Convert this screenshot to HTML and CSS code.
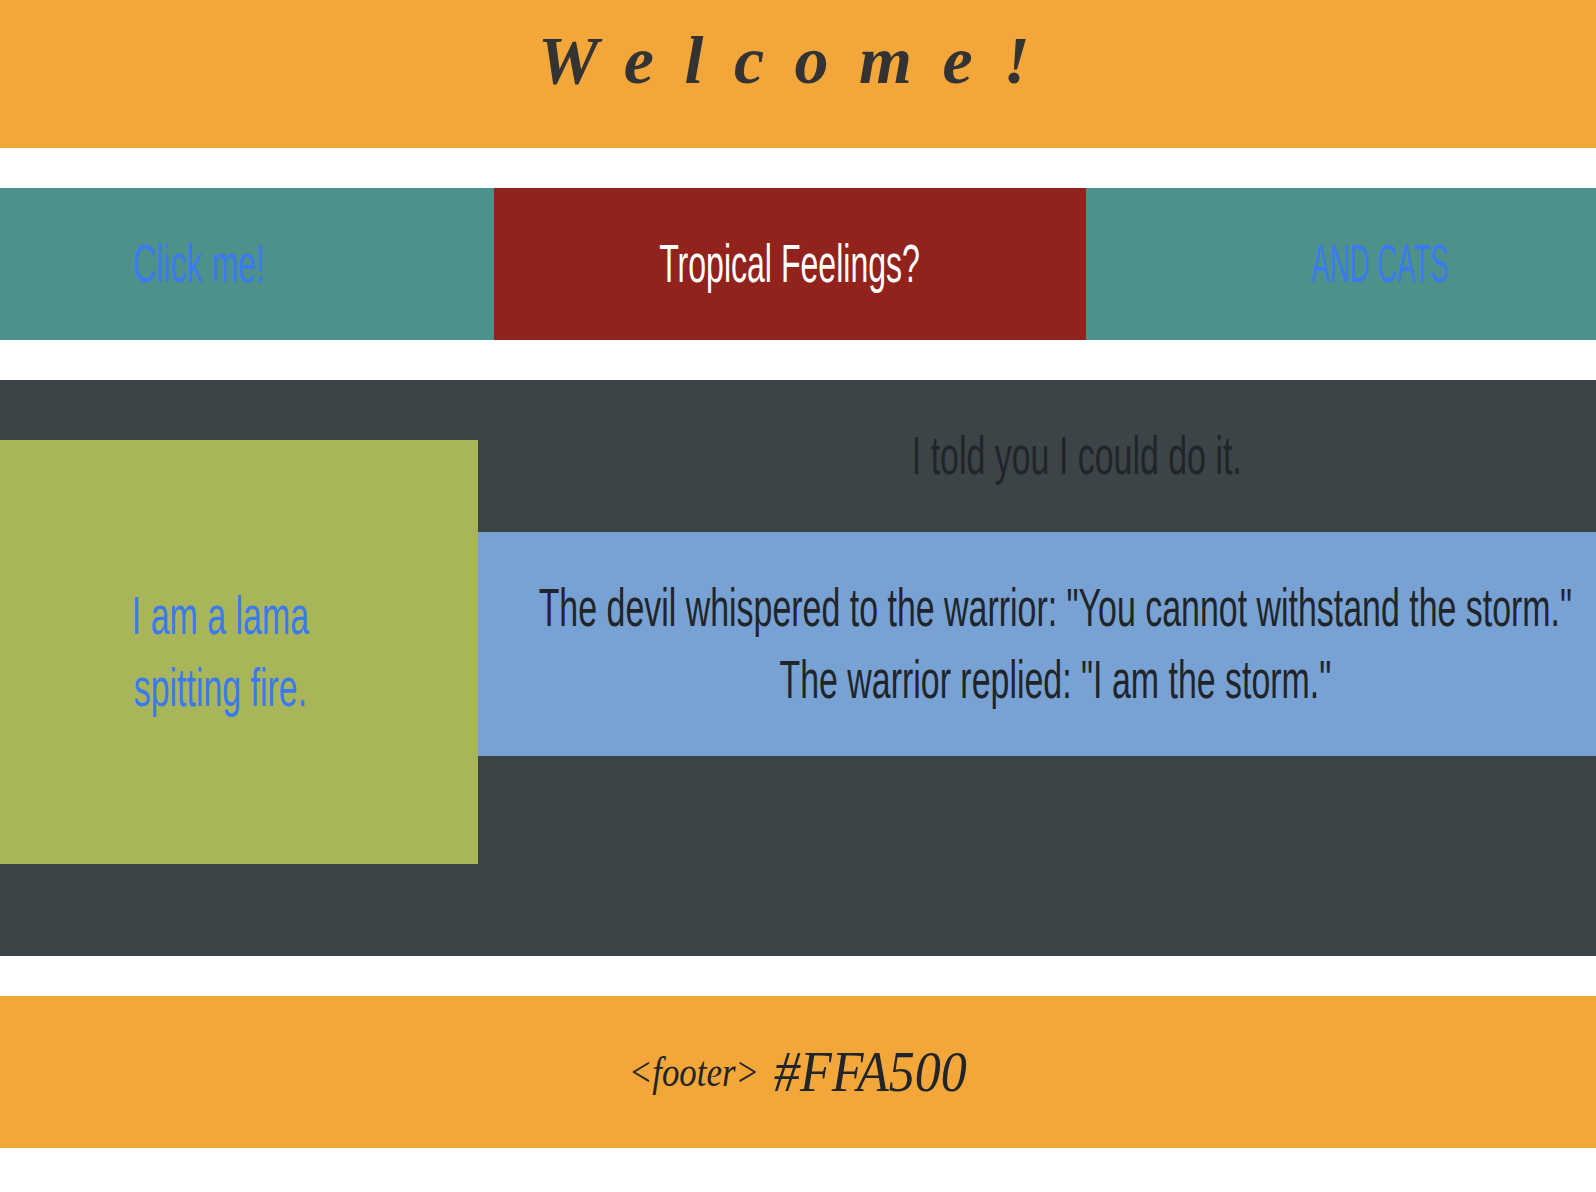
FILE: index.html
```html
<!DOCTYPE html>
<html lang="en">
<head>
    <meta charset="UTF-8">
    <meta name="viewport" content="width=device-width, initial-scale=1.0">
    <title>Welcome!</title>
    <link rel="stylesheet" href="styles.css">
</head>
<body>
    <header class="site-header">
        <h1 class="welcome">Welcome!</h1>
    </header>

    <nav class="site-nav">
        <div class="nav-left"><a class="tall link" href="#">Click me!</a></div>
        <div class="nav-middle"><span class="tall">Tropical Feelings?</span></div>
        <div class="nav-right"><a class="tall caps link" href="#">AND CATS</a></div>
    </nav>

    <main class="content">
        <aside class="lama">
            <p class="tall link">I am a lama<br>spitting fire.</p>
        </aside>
        <section class="story">
            <p class="told"><span class="tall">I told you I could do it.</span></p>
            <blockquote class="quote">
                <p class="tall">The devil whispered to the warrior: "You cannot withstand the storm."<br>The warrior replied: "I am the storm."</p>
            </blockquote>
        </section>
    </main>

    <footer class="site-footer">
        <span class="footer-tag">&lt;footer&gt;</span>
        <span class="footer-hex">#FFA500</span>
    </footer>
</body>
</html>
```

FILE: styles.css
```css
* {
    box-sizing: border-box;
}

body {
    margin: 0;
    background-color: #fff;
    font-family: 'Liberation Sans Narrow', 'Liberation Sans', sans-serif;
    font-size: 53px;
    line-height: 72px;
}

p, h1, blockquote {
    margin: 0;
}

a {
    text-decoration: none;
}

/* condensed display type, the narrow font squeezed further */
.tall {
    display: inline-block;
    transform: scaleX(0.64);
    white-space: nowrap;
}

.site-nav .tall {
    transform: scaleX(0.605);
}

.site-nav .caps {
    transform: scaleX(0.52);
}

.link {
    color: #3a7af0;
}

.site-header {
    height: 148px;
    margin-bottom: 40px;
    background-color: #f3a73a;
    text-align: center;
}

.welcome {
    padding: 22px 0 0 2px;
    color: #333;
    font-family: 'Liberation Serif', serif;
    font-size: 68px;
    font-style: italic;
    font-weight: bold;
    line-height: 76px;
    letter-spacing: 30.5px;
}

.site-nav {
    display: flex;
    height: 152px;
    margin-bottom: 40px;
    text-align: center;
}

.site-nav > div {
    padding-top: 40px;
}

.nav-left {
    width: 494px;
    padding-right: 96px;
    background-color: #4e918b;
}

.nav-middle {
    width: 592px;
    background-color: #92221c;
    color: #fff;
}

.nav-right {
    width: 510px;
    padding-left: 78px;
    background-color: #4e918b;
}

.content {
    display: flex;
    height: 576px;
    margin-bottom: 40px;
    padding-top: 60px;
    background-color: #3c4448;
}

.lama {
    width: 478px;
    height: 424px;
    padding: 140px 38px 0 0;
    background-color: #a9b559;
    text-align: center;
}

.story {
    flex: 1;
    min-width: 0;
    margin-top: -60px;
    text-align: center;
    color: #212529;
}

.told {
    height: 152px;
    padding: 40px 0 0 79px;
}

.quote {
    display: flex;
    justify-content: center;
    height: 224px;
    padding: 40px 0 0 36px;
    background-color: #78a2d4;
}

.site-footer {
    display: flex;
    justify-content: center;
    align-items: center;
    gap: 15px;
    height: 152px;
    margin-bottom: 44px;
    padding-right: 12px;
    background-color: #f3a73a;
    color: #212529;
    font-family: 'Liberation Serif', serif;
    font-style: italic;
}

.footer-tag {
    font-size: 42px;
    transform: scaleX(0.83);
    transform-origin: right;
}

.footer-hex {
    font-size: 56px;
    transform: scaleX(0.93);
    transform-origin: left;
}
```
